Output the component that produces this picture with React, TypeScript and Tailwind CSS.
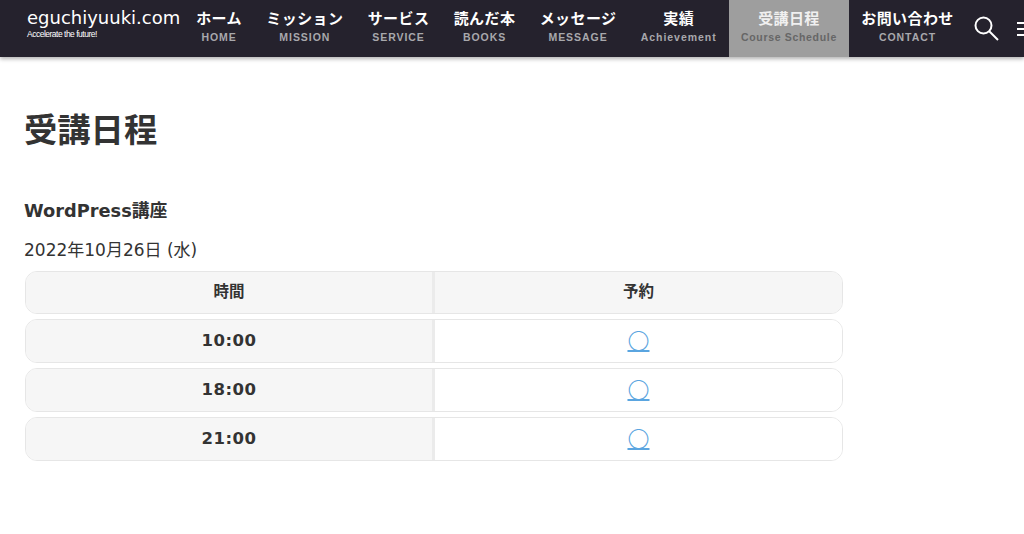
const cjk = '"DejaVu Sans", "Noto Sans CJK JP", sans-serif';

const nav = [
  { ja: "ホーム", en: "HOME" },
  { ja: "ミッション", en: "MISSION" },
  { ja: "サービス", en: "SERVICE" },
  { ja: "読んだ本", en: "BOOKS" },
  { ja: "メッセージ", en: "MESSAGE" },
  { ja: "実績", en: "Achievement" },
  { ja: "受講日程", en: "Course Schedule", active: true },
  { ja: "お問い合わせ", en: "CONTACT" },
];

const times = ["10:00", "18:00", "21:00"];

function Row({ left, right, head }: { left: string; right: string; head?: boolean }) {
  return (
    <div className={`flex ${head ? "h-[43px]" : "h-[44px]"} rounded-[12px] border border-[#e6e6e6] overflow-hidden text-[#333]`}>
      <div className={`w-[409px] flex items-center justify-center bg-[#f6f6f6] border-r-[3px] border-[#ebebeb] font-bold ${head ? "text-[15.5px]" : "text-[16.5px] tracking-[0.5px]"}`}>
        {left}
      </div>
      <div className={`flex-1 flex items-center justify-center ${head ? "bg-[#f6f6f6] font-bold text-[15.5px]" : "bg-white"}`}>
        {head ? right : (
          <a href="#" className="text-[#5aa5e0] underline underline-offset-[1px] text-[22px] leading-none font-light -mt-[4px] font-['Noto_Sans_CJK_JP']">{right}</a>
        )}
      </div>
    </div>
  );
}

export default function App() {
  return (
    <div className="h-[534px] w-[1024px] overflow-hidden bg-white" style={{ fontFamily: cjk }}>
      <header className="h-[57px] bg-[#25222d] flex shadow-[0_2px_4px_rgba(0,0,0,0.3)] relative">
        <div className="w-[184px] pl-[27px] pt-[8px] shrink-0 text-white">
          <div className="text-[18px] leading-[20px] whitespace-nowrap font-['DejaVu_Sans']">eguchiyuuki.com</div>
          <div className="mt-[2px] text-[8.5px] leading-[9px] tracking-[-0.5px] whitespace-nowrap font-['Liberation_Sans']">Accelerate the future!</div>
        </div>
        <nav className="flex shrink-0">
          {nav.map((n) => (
            <a key={n.en} href="#" className={`px-[12.2px] flex flex-col items-center pt-[9px] whitespace-nowrap ${n.active ? "bg-[#9e9e9e]" : ""}`}>
              <span className={`text-[15px] leading-[20px] font-bold tracking-[0.4px] ${n.active ? "text-[#f0f0f0]" : "text-white"}`}>{n.ja}</span>
              <span className={`text-[10.5px] leading-[16px] font-bold font-['Liberation_Sans'] ${n.active ? "text-[#666] tracking-[0.68px]" : "text-[#a8a8ac] tracking-[0.95px]"}`}>{n.en}</span>
            </a>
          ))}
        </nav>
        <div className="flex items-center shrink-0 pl-[8px] text-white gap-[18px]">
          <svg width="25" height="25" viewBox="0 0 25 25" fill="none" stroke="currentColor" strokeWidth="2">
            <circle cx="9.5" cy="9.5" r="8" />
            <path d="M15 15l9 9" />
          </svg>
          <svg width="20" height="16" viewBox="0 0 20 16" fill="none" stroke="currentColor" strokeWidth="2">
            <path d="M0 2h20M0 8h20M0 14h20" />
          </svg>
        </div>
      </header>
      <main className="pl-[24px] w-[843px] text-[#333]">
        <h1 className="mt-[54px] text-[33.3px] leading-[40px] font-bold">受講日程</h1>
        <h2 className="mt-[48px] text-[17.8px] leading-[24px] font-bold">WordPress講座</h2>
        <p className="mt-[15px] text-[17px] leading-[24px]">2022年10月26日 (水)</p>
        <div className="mt-[9px] ml-px flex flex-col gap-[5px]">
          <Row head left="時間" right="予約" />
          {times.map((t) => (
            <Row key={t} left={t} right="〇" />
          ))}
        </div>
      </main>
    </div>
  );
}
